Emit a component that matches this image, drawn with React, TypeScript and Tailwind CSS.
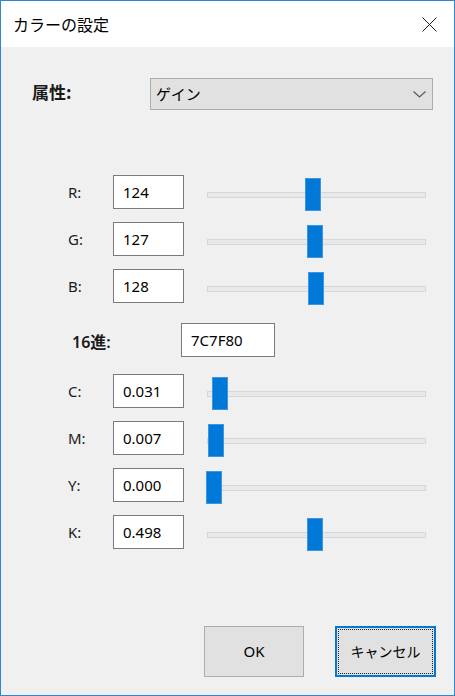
import React from "react";

type Row = { label: string; value: string; pos: number };

const rgb: Row[] = [
  { label: "R:", value: "124", pos: 98 },
  { label: "G:", value: "127", pos: 100 },
  { label: "B:", value: "128", pos: 101 },
];

const cmyk: Row[] = [
  { label: "C:", value: "0.031", pos: 5 },
  { label: "M:", value: "0.007", pos: 1 },
  { label: "Y:", value: "0.000", pos: -1 },
  { label: "K:", value: "0.498", pos: 100 },
];

function SliderRow({ row }: { row: Row }) {
  return (
    <div className="flex items-start h-[34px] pl-[67px]">
      <div className="w-[45px] h-[34px] flex items-center text-[15px] text-[#1a1a1a]">{row.label}</div>
      <div className="w-[71px] h-[34px] border border-[#7a7a7a] bg-white flex items-center pl-[9px] text-[15px] text-black">
        {row.value}
      </div>
      <div className="relative ml-[23px] w-[219px] h-[33px] mt-[3px] flex items-center">
        <div className="w-full h-[6px] bg-[#e7eaea] border border-[#d6d6d6]" />
        <div
          className="absolute top-0 w-[16px] h-[33px] bg-[#0078d7] border border-[#3d97e0]"
          style={{ left: row.pos }}
        />
      </div>
    </div>
  );
}

export default function App() {
  return (
    <div className="w-[455px] h-[696px] border border-[#2b87d8] bg-[#f0f0f0] flex flex-col font-['Noto_Sans','Noto_Sans_CJK_JP',sans-serif] text-black overflow-hidden">
      {/* Title bar */}
      <div className="h-[46px] bg-white flex items-center justify-between shrink-0">
        <div className="pl-[12px] text-[16px] font-['Noto_Sans_CJK_JP',sans-serif] text-black leading-none">カラーの設定</div>
        <svg width="15" height="15" viewBox="0 0 15 15" className="mr-[17px]">
          <path d="M0.5 0.5 L14.5 14.5 M14.5 0.5 L0.5 14.5" stroke="#1a1a1a" strokeWidth="1" fill="none" />
        </svg>
      </div>

      {/* Attribute row */}
      <div className="mt-[31px] flex items-center h-[32px]">
        <div className="pl-[31px] w-[149px] text-[17px] font-semibold font-['Noto_Sans_CJK_JP',sans-serif] text-[#1a1a1a] -mt-[4px]">属性:</div>
        <div className="w-[283px] h-[32px] bg-[#e1e1e1] border border-[#adadad] flex items-center justify-between pl-[5px] pr-[6px]">
          <span className="text-[15px] font-['Noto_Sans_CJK_JP',sans-serif] text-black">ゲイン</span>
          <svg width="13" height="7" viewBox="0 0 13 7">
            <path d="M0.5 0.5 L6.5 6 L12.5 0.5" stroke="#5a5a5a" strokeWidth="1.2" fill="none" />
          </svg>
        </div>
      </div>

      {/* RGB sliders */}
      <div className="mt-[65px] flex flex-col gap-[13px]">
        {rgb.map((r) => (
          <SliderRow key={r.label} row={r} />
        ))}
      </div>

      {/* Hex row */}
      <div className="mt-[20px] flex items-center h-[34px] pl-[71px]">
        <div className="w-[109px] text-[16px] font-semibold text-[#1a1a1a] mt-[4px]">16進:</div>
        <div className="w-[94px] h-[34px] border border-[#7a7a7a] bg-white flex items-center pl-[9px] text-[15px] text-black">
          7C7F80
        </div>
      </div>

      {/* CMYK sliders */}
      <div className="mt-[17px] flex flex-col gap-[13px]">
        {cmyk.map((r) => (
          <SliderRow key={r.label} row={r} />
        ))}
      </div>

      {/* Buttons */}
      <div className="mt-[77px] flex pl-[203px] gap-[31px]">
        <div className="w-[100px] h-[51px] bg-[#e1e1e1] border border-[#adadad] flex items-center justify-center text-[15px] text-black">
          OK
        </div>
        <div className="relative w-[101px] h-[51px] bg-[#e1e1e1] border-2 border-[#0078d7] flex items-center justify-center text-[14px] font-['Noto_Sans_CJK_JP',sans-serif] text-black">
          <div className="absolute inset-[1px] border border-dotted border-[#222]" />
          キャンセル
        </div>
      </div>
    </div>
  );
}
